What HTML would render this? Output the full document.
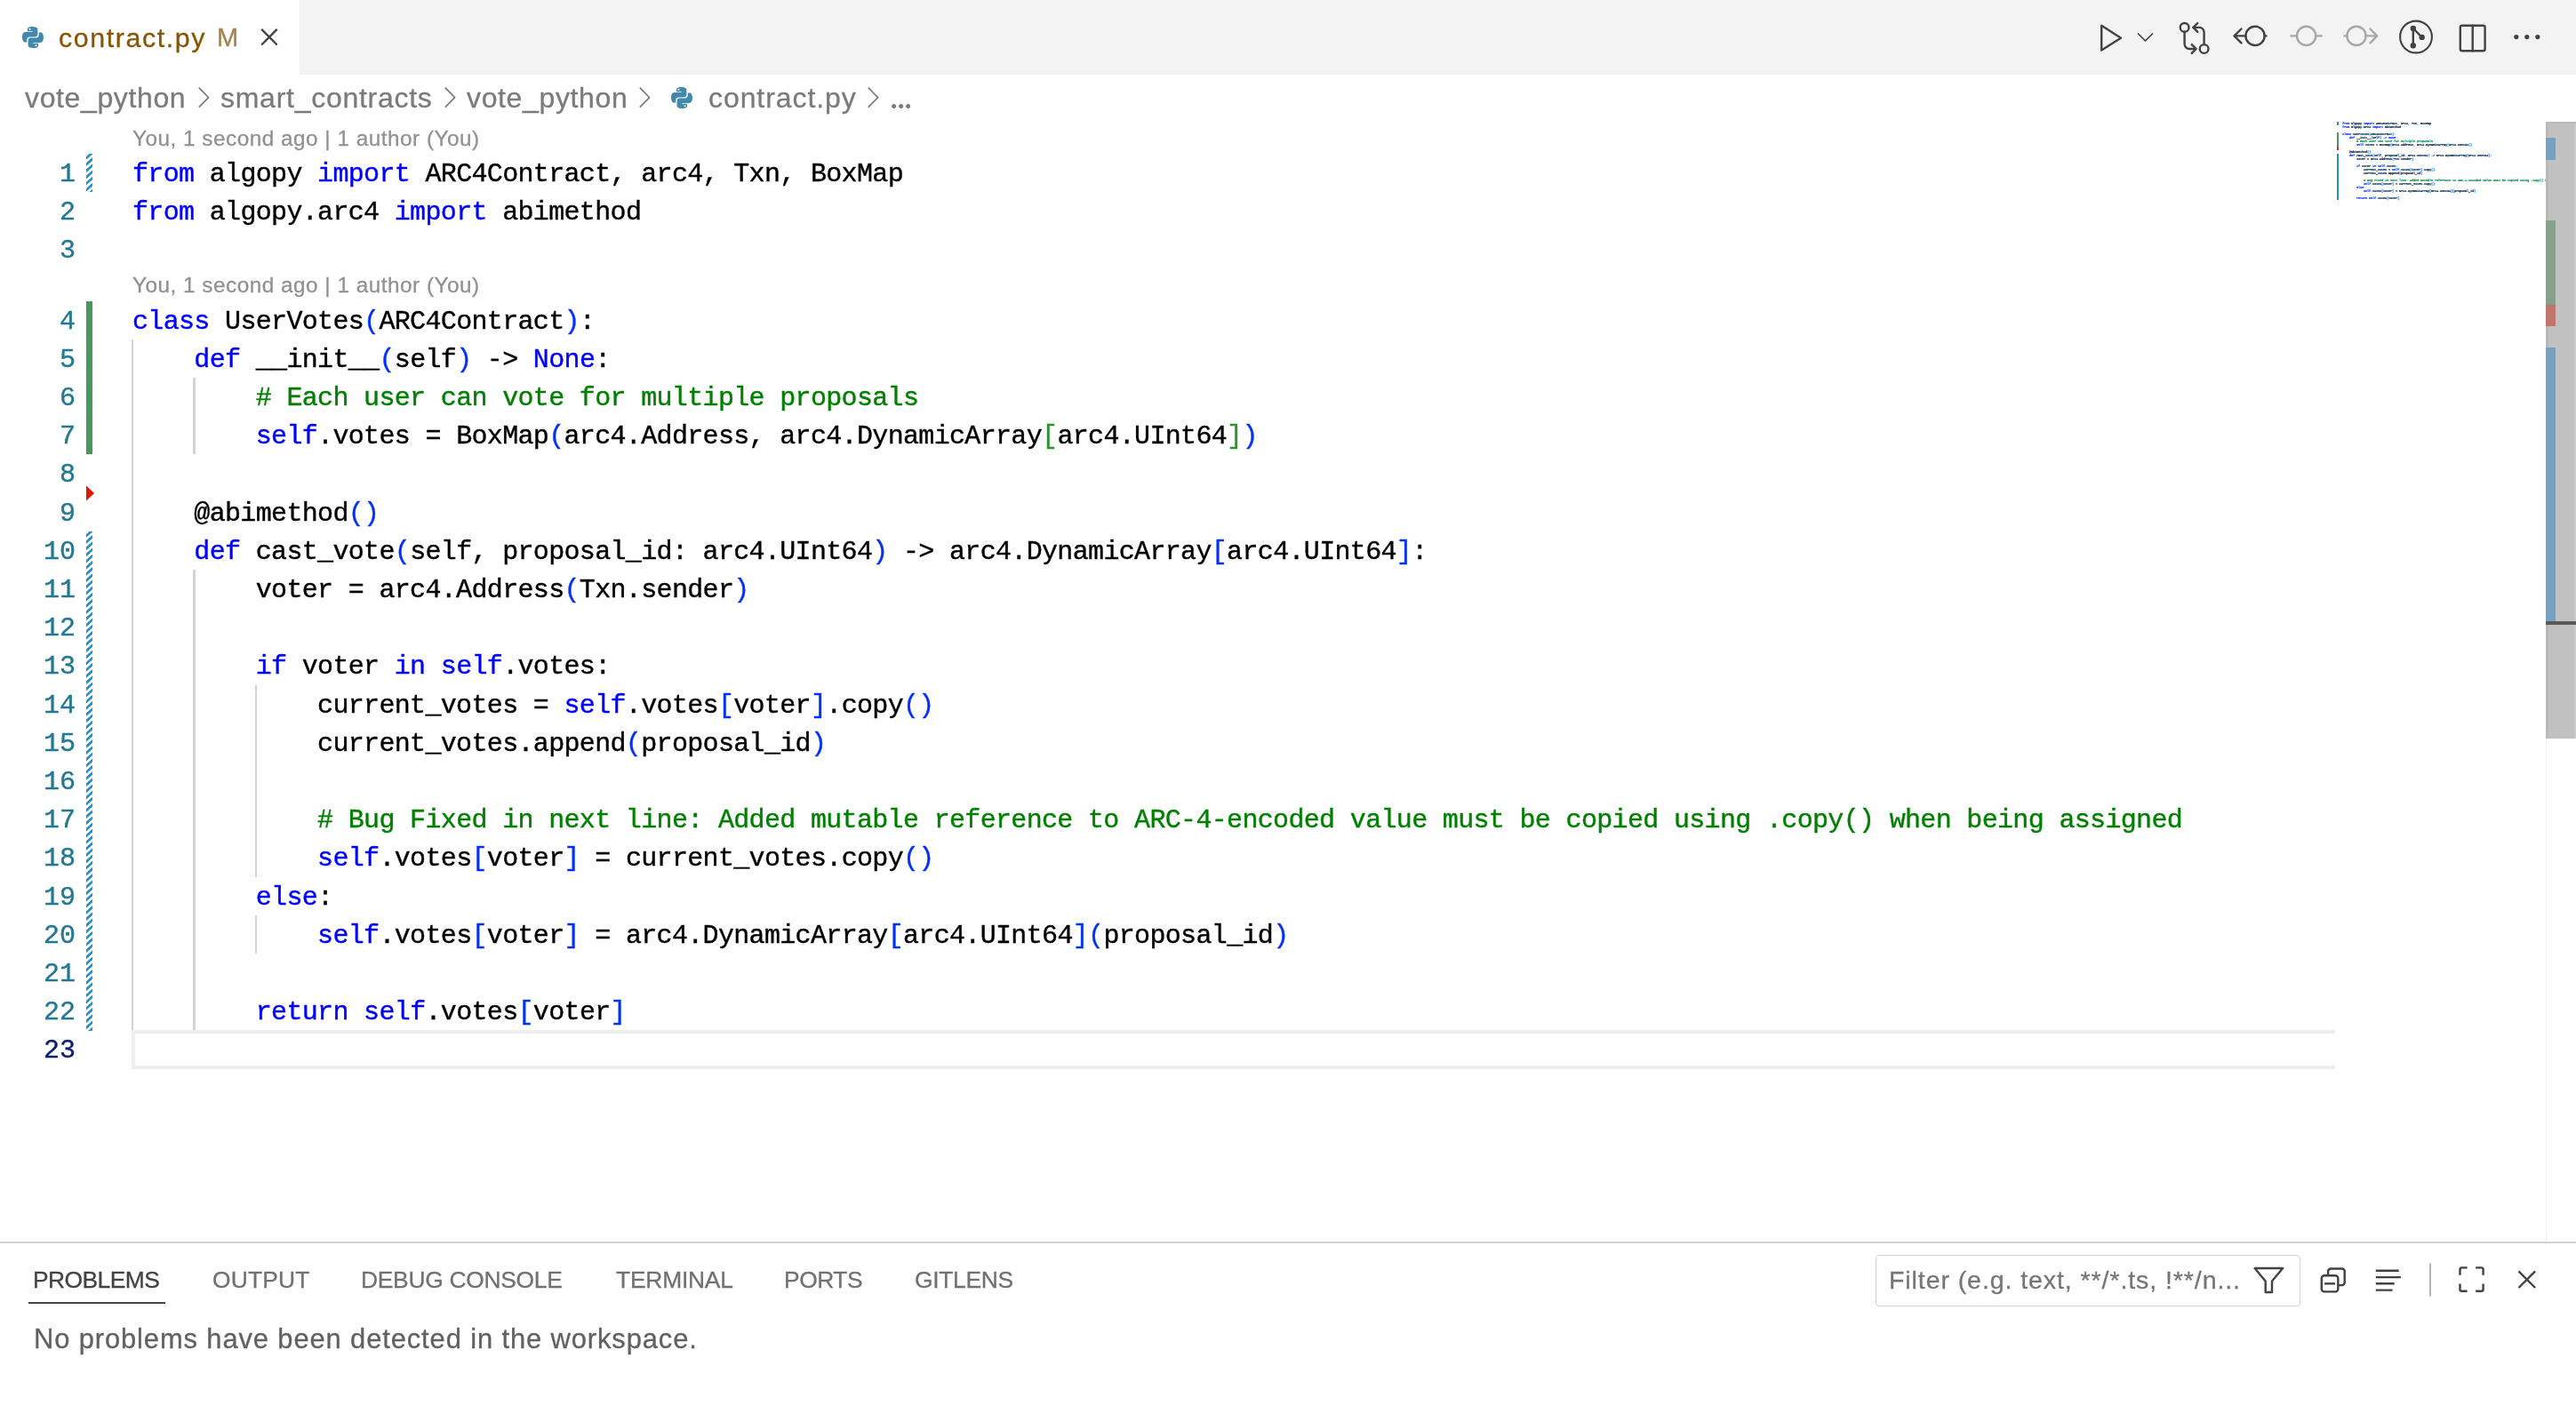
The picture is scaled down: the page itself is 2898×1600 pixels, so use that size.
<!DOCTYPE html>
<html><head><meta charset="utf-8">
<style>
*{margin:0;padding:0;box-sizing:border-box}
html,body{width:2898px;height:1600px;overflow:hidden;background:#fff}
body{position:relative;font-family:"Liberation Sans",sans-serif}
.abs{position:absolute}
#tabbar{position:absolute;left:0;top:0;width:2898px;height:84px;background:#f3f3f3}
#tab{position:absolute;left:0;top:0;width:337px;height:84px;background:#fff}
.tabtxt{position:absolute;left:65.8px;top:22.2px;font-size:30.4px;letter-spacing:1.48px;color:#875b13;white-space:nowrap;line-height:40px}
.tabm{position:absolute;left:243.7px;top:23px;font-size:27px;font-weight:bold;color:#a4834f;line-height:40px}
.bc{position:absolute;top:89.6px;font-size:32px;letter-spacing:0.46px;color:#7b7b7b;white-space:nowrap;line-height:40px}
.ln{position:absolute;left:0;width:85px;text-align:right;font-family:"Liberation Mono",monospace;font-size:30.0px;padding-top:2px;line-height:43.2px;height:43.2px;color:#237893}
.ln.act{color:#0b216f}
.cl{position:absolute;left:148.5px;font-family:"Liberation Mono",monospace;font-size:30.0px;letter-spacing:-0.6639px;padding-top:2px;line-height:43.2px;height:43.2px;color:#000;white-space:pre}
.cl,.ln{-webkit-text-stroke:0.4px currentColor;will-change:transform}
.k{color:#0000ff}
.c{color:#008000}
.b1{color:#0431fa}
.b2{color:#319331}
.ig{position:absolute;width:2.4px;background:#d3d3d3}
.lens{position:absolute;left:149.5px;font-size:24.3px;letter-spacing:0.45px;color:#919191;white-space:nowrap;line-height:30px}
.ptab{position:absolute;top:1426.7px;font-size:26.4px;letter-spacing:-0.9px;color:#717171;white-space:nowrap;line-height:26px}

.bcchev{position:absolute;top:98px}
.gbar{position:absolute;left:97px;width:7px}
.mod{background-image:linear-gradient(-45deg,#2090d3 25%,transparent 25%,transparent 50%,#2090d3 50%,#2090d3 75%,transparent 75%,transparent);background-size:7.2px 7.2px}
.add{background:#48985d}
</style></head><body>
<div id="tabbar">
  <div id="tab">
    <svg class="abs" style="left:24px;top:29px" width="26" height="26" viewBox="0 0 26 26">
      <path fill="#4289ad" d="M12.6 1c-6 0-5.6 2.6-5.6 2.6v2.7h5.7v.8H4.8S1 6.7 1 12.7s3.3 5.8 3.3 5.8h2v-2.8s-.1-3.3 3.3-3.3h5.6s3.2.1 3.2-3.1V4.2S18.9 1 12.6 1zm-3.1 1.8a1 1 0 110 2 1 1 0 010-2z"/>
      <path fill="#4289ad" d="M13.4 25c6 0 5.6-2.6 5.6-2.6v-2.7h-5.7v-.8h7.9s3.8.4 3.8-5.6-3.3-5.8-3.3-5.8h-2v2.8s.1 3.3-3.3 3.3h-5.6s-3.2-.1-3.2 3.1v5.1S7.1 25 13.4 25zm3.1-1.8a1 1 0 110-2 1 1 0 010 2z"/>
    </svg>
<div id="t_tab" class="abs" style="left:66.10px;top:22.21px;font-size:30.4px;letter-spacing:1.580px;color:#895503;font-weight:normal;white-space:nowrap;-webkit-text-stroke:0.3px #895503;will-change:transform;line-height:40px">contract.py</div>
<div id="t_tabm" class="abs" style="left:244.10px;top:21.85px;font-size:29px;letter-spacing:0.000px;color:#a4834f;font-weight:normal;white-space:nowrap;-webkit-text-stroke:0.3px #a4834f;will-change:transform;line-height:40px">M</div>
    <svg class="abs" style="left:292px;top:31px" width="22" height="22" viewBox="0 0 22 22"><path d="M2.2 1.9L19.7 19.5M19.7 1.9L2.2 19.5" stroke="#424242" stroke-width="2.4" fill="none"/></svg>
  </div>
</div>

<svg class="abs" style="left:2340px;top:0" width="558" height="84" viewBox="2340 0 558 84" fill="none" stroke="#424242" stroke-width="2.4" stroke-linecap="round" stroke-linejoin="round">
  <path d="M2364.2 28.8L2386 42.7L2364.2 56.6Z"/>
  <path d="M2405.5 38L2413.5 46L2421.5 38" stroke-width="1.7"/>
  <circle cx="2457.6" cy="30.9" r="4.9"/>
  <circle cx="2479.6" cy="55" r="4.9"/>
  <path d="M2457.6 36v13.5a5.5 5.5 0 0 0 5.5 5.5h7"/>
  <path d="M2465.7 50.1l4.9 4.9-4.9 4.9"/>
  <path d="M2479.6 50V36.4a5.5 5.5 0 0 0-5.5-5.5h-6.5"/>
  <path d="M2472.3 26l-4.9 4.9 4.9 4.9"/>
  <circle cx="2537" cy="40.4" r="10.6"/>
  <path d="M2526.4 40.4H2513.5M2521.5 32.5L2513.5 40.4L2521.5 48.3M2547.6 40.4H2549.5"/>
  <g stroke="#a8a8a8">
  <circle cx="2594.6" cy="40.4" r="10.6"/>
  <path d="M2577.5 40.4H2584M2605.2 40.4H2611.7"/>
  <circle cx="2651" cy="40.4" r="10.6"/>
  <path d="M2637.5 40.4H2640.4M2661.6 40.4H2673.5M2666.5 32.5L2674.2 40.4L2666.5 48.3"/>
  </g>
  <circle cx="2718" cy="41.5" r="17.9" stroke-width="2.1"/>
  <path d="M2714.8 32V51.2M2714.8 32L2724.7 41.9"/>
  <circle cx="2767" cy="27" r="0" />
  <rect x="2767.8" y="28.8" width="27.8" height="28.4" rx="2"/>
  <path d="M2781.7 28.8V57.2"/>
</svg>
<svg class="abs" style="left:2700px;top:20px" width="40" height="40" viewBox="2700 20 40 40" fill="#424242">
  <circle cx="2714.8" cy="32" r="3.2"/><circle cx="2714.8" cy="51.2" r="3.2"/><circle cx="2724.7" cy="41.9" r="3.2"/>
</svg>
<svg class="abs" style="left:2820px;top:30px" width="50" height="24" viewBox="2820 30 50 24" fill="#424242">
  <circle cx="2830.8" cy="41.6" r="2.6"/><circle cx="2842.8" cy="41.6" r="2.6"/><circle cx="2854.8" cy="41.6" r="2.6"/>
</svg>
<!-- breadcrumbs -->
<div id="t_bc1" class="abs" style="left:28.05px;top:89.61px;font-size:32px;letter-spacing:0.630px;color:#7b7b7b;font-weight:normal;white-space:nowrap;-webkit-text-stroke:0.3px #7b7b7b;will-change:transform;line-height:40px">vote_python</div>
<div id="t_bc2" class="abs" style="left:248.00px;top:89.61px;font-size:32px;letter-spacing:0.731px;color:#7b7b7b;font-weight:normal;white-space:nowrap;-webkit-text-stroke:0.3px #7b7b7b;will-change:transform;line-height:40px">smart_contracts</div>
<div id="t_bc3" class="abs" style="left:525.00px;top:89.61px;font-size:32px;letter-spacing:0.640px;color:#7b7b7b;font-weight:normal;white-space:nowrap;-webkit-text-stroke:0.3px #7b7b7b;will-change:transform;line-height:40px">vote_python</div>
<div id="t_bc4" class="abs" style="left:796.90px;top:89.61px;font-size:32px;letter-spacing:0.920px;color:#7b7b7b;font-weight:normal;white-space:nowrap;-webkit-text-stroke:0.3px #7b7b7b;will-change:transform;line-height:40px">contract.py</div>
<svg class="abs" style="left:1000px;top:112px" width="30" height="14" viewBox="1000 112 30 14" fill="#7b7b7b"><circle cx="1005.6" cy="119.4" r="2.5"/><circle cx="1013.6" cy="119.4" r="2.5"/><circle cx="1021.6" cy="119.4" r="2.5"/></svg>
<svg class="bcchev" style="left:222px" width="14" height="24" viewBox="0 0 14 24"><path d="M1.8 0.7L12.6 11.7L1.8 22.6" stroke="#7b7b7b" stroke-width="1.7" fill="none"/></svg>
<svg class="bcchev" style="left:499px" width="14" height="24" viewBox="0 0 14 24"><path d="M1.8 0.7L12.6 11.7L1.8 22.6" stroke="#7b7b7b" stroke-width="1.7" fill="none"/></svg>
<svg class="bcchev" style="left:718px" width="14" height="24" viewBox="0 0 14 24"><path d="M1.8 0.7L12.6 11.7L1.8 22.6" stroke="#7b7b7b" stroke-width="1.7" fill="none"/></svg>
<svg class="bcchev" style="left:975px" width="14" height="24" viewBox="0 0 14 24"><path d="M1.8 0.7L12.6 11.7L1.8 22.6" stroke="#7b7b7b" stroke-width="1.7" fill="none"/></svg>
<svg class="abs" style="left:754px;top:97px" width="26" height="26" viewBox="0 0 26 26">
  <path fill="#4289ad" d="M12.6 1c-6 0-5.6 2.6-5.6 2.6v2.7h5.7v.8H4.8S1 6.7 1 12.7s3.3 5.8 3.3 5.8h2v-2.8s-.1-3.3 3.3-3.3h5.6s3.2.1 3.2-3.1V4.2S18.9 1 12.6 1zm-3.1 1.8a1 1 0 110 2 1 1 0 010-2z"/>
  <path fill="#4289ad" d="M13.4 25c6 0 5.6-2.6 5.6-2.6v-2.7h-5.7v-.8h7.9s3.8.4 3.8-5.6-3.3-5.8-3.3-5.8h-2v2.8s.1 3.3-3.3 3.3h-5.6s-3.2-.1-3.2 3.1v5.1S7.1 25 13.4 25zm3.1-1.8a1 1 0 110-2 1 1 0 010 2z"/>
</svg>



<div class="gbar mod" style="top:173px;height:43.2px"></div>
<div class="gbar add" style="top:338.6px;height:172.8px"></div>
<svg class="abs" style="left:96px;top:545px" width="12" height="20" viewBox="0 0 12 20"><path d="M1 1.5L10 10L1 18.5Z" fill="#e51400"/></svg>
<div class="gbar mod" style="top:598.2px;height:561.6px"></div>
<div class="abs" style="left:148px;top:1159px;width:2479px;height:44px;border:4px solid #eeeeee;border-right:none"></div>
<div class="ig" style="left:148.10px;top:381.80px;height:777.60px"></div>
<div class="ig" style="left:217.46px;top:425.00px;height:86.40px"></div>
<div class="ig" style="left:217.46px;top:641.00px;height:518.40px"></div>
<div class="ig" style="left:286.81px;top:770.60px;height:216.00px"></div>
<div class="ig" style="left:286.81px;top:1029.80px;height:43.20px"></div>
<div class="ln" style="top:173.00px">1</div>
<div class="cl" style="top:173.00px"><span class="k">from</span> algopy <span class="k">import</span> ARC4Contract, arc4, Txn, BoxMap</div>
<div class="ln" style="top:216.20px">2</div>
<div class="cl" style="top:216.20px"><span class="k">from</span> algopy.arc4 <span class="k">import</span> abimethod</div>
<div class="ln" style="top:259.40px">3</div>
<div class="ln" style="top:338.60px">4</div>
<div class="cl" style="top:338.60px"><span class="k">class</span> UserVotes<span class="b1">(</span>ARC4Contract<span class="b1">)</span>:</div>
<div class="ln" style="top:381.80px">5</div>
<div class="cl" style="top:381.80px">    <span class="k">def</span> __init__<span class="b1">(</span>self<span class="b1">)</span> -&gt; <span class="k">None</span>:</div>
<div class="ln" style="top:425.00px">6</div>
<div class="cl" style="top:425.00px">        <span class="c"># Each user can vote for multiple proposals</span></div>
<div class="ln" style="top:468.20px">7</div>
<div class="cl" style="top:468.20px">        <span class="k">self</span>.votes = BoxMap<span class="b1">(</span>arc4.Address, arc4.DynamicArray<span class="b2">[</span>arc4.UInt64<span class="b2">]</span><span class="b1">)</span></div>
<div class="ln" style="top:511.40px">8</div>
<div class="ln" style="top:554.60px">9</div>
<div class="cl" style="top:554.60px">    @abimethod<span class="b1">()</span></div>
<div class="ln" style="top:597.80px">10</div>
<div class="cl" style="top:597.80px">    <span class="k">def</span> cast_vote<span class="b1">(</span>self, proposal_id: arc4.UInt64<span class="b1">)</span> -&gt; arc4.DynamicArray<span class="b1">[</span>arc4.UInt64<span class="b1">]</span>:</div>
<div class="ln" style="top:641.00px">11</div>
<div class="cl" style="top:641.00px">        voter = arc4.Address<span class="b1">(</span>Txn.sender<span class="b1">)</span></div>
<div class="ln" style="top:684.20px">12</div>
<div class="ln" style="top:727.40px">13</div>
<div class="cl" style="top:727.40px">        <span class="k">if</span> voter <span class="k">in</span> <span class="k">self</span>.votes:</div>
<div class="ln" style="top:770.60px">14</div>
<div class="cl" style="top:770.60px">            current_votes = <span class="k">self</span>.votes<span class="b1">[</span>voter<span class="b1">]</span>.copy<span class="b1">()</span></div>
<div class="ln" style="top:813.80px">15</div>
<div class="cl" style="top:813.80px">            current_votes.append<span class="b1">(</span>proposal_id<span class="b1">)</span></div>
<div class="ln" style="top:857.00px">16</div>
<div class="ln" style="top:900.20px">17</div>
<div class="cl" style="top:900.20px">            <span class="c"># Bug Fixed in next line: Added mutable reference to ARC-4-encoded value must be copied using .copy() when being assigned</span></div>
<div class="ln" style="top:943.40px">18</div>
<div class="cl" style="top:943.40px">            <span class="k">self</span>.votes<span class="b1">[</span>voter<span class="b1">]</span> = current_votes.copy<span class="b1">()</span></div>
<div class="ln" style="top:986.60px">19</div>
<div class="cl" style="top:986.60px">        <span class="k">else</span>:</div>
<div class="ln" style="top:1029.80px">20</div>
<div class="cl" style="top:1029.80px">            <span class="k">self</span>.votes<span class="b1">[</span>voter<span class="b1">]</span> = arc4.DynamicArray<span class="b1">[</span>arc4.UInt64<span class="b1">]</span><span class="b1">(</span>proposal_id<span class="b1">)</span></div>
<div class="ln" style="top:1073.00px">21</div>
<div class="ln" style="top:1116.20px">22</div>
<div class="cl" style="top:1116.20px">        <span class="k">return</span> <span class="k">self</span>.votes<span class="b1">[</span>voter<span class="b1">]</span></div>
<div class="ln act" style="top:1159.40px">23</div>

<div id="t_lens1" class="abs" style="left:148.60px;top:140.58px;font-size:24.3px;letter-spacing:0.511px;color:#919191;font-weight:normal;white-space:nowrap;-webkit-text-stroke:0.3px #919191;will-change:transform;line-height:30px">You, 1 second ago | 1 author (You)</div>
<div id="t_lens2" class="abs" style="left:148.60px;top:306.18px;font-size:24.3px;letter-spacing:0.511px;color:#919191;font-weight:normal;white-space:nowrap;-webkit-text-stroke:0.3px #919191;will-change:transform;line-height:30px">You, 1 second ago | 1 author (You)</div>


<!-- scrollbar -->
<div class="abs" style="left:2864px;top:137px;width:34px;height:693.7px;background:#c1c1c1"></div>
<div class="abs" style="left:2864px;top:137px;width:2.8px;height:693.7px;background:#b9b9b9"></div>
<div class="abs" style="left:2864px;top:137px;width:34px;height:2.2px;background:#b9b9b9"></div>
<div class="abs" style="left:2895.8px;top:139px;width:2.2px;height:691.7px;background:#cbcbcb"></div>
<div class="abs" style="left:2864px;top:830.7px;width:1px;height:566px;background:#efefef"></div>
<div class="abs" style="left:2864px;top:155.4px;width:11.4px;height:24.5px;background:#7ba0be"></div>
<div class="abs" style="left:2864px;top:247.5px;width:11.4px;height:95.2px;background:#86a08c"></div>
<div class="abs" style="left:2864px;top:342.7px;width:11.4px;height:24.3px;background:#c0756b"></div>
<div class="abs" style="left:2864px;top:390.6px;width:11.4px;height:308.2px;background:#7ba0be"></div>
<div class="abs" style="left:2864px;top:699px;width:34px;height:3.7px;background:#5a5a5a"></div>
<!-- minimap deco -->
<div class="abs" style="left:2628.8px;top:136.8px;width:2.4px;height:4px;background:#2090d3"></div>
<div class="abs" style="left:2628.8px;top:149px;width:2.4px;height:16px;background:#48985d"></div>
<div class="abs" style="left:2628.8px;top:165px;width:2.4px;height:4px;background:#c9322a"></div>
<div class="abs" style="left:2628.8px;top:173px;width:2.4px;height:52px;background:#2090d3"></div>
<div class="abs" style="left:2634.8px;top:137px;width:229.2px;height:100px;overflow:hidden"><div style="width:2292px;transform:scale(0.1);transform-origin:0 0;font-family:'Liberation Mono',monospace;font-size:33.33px;line-height:40px;font-weight:bold;color:#000;-webkit-text-stroke:1px currentColor"><div style="height:40px;white-space:pre"><span class="k">from</span> algopy <span class="k">import</span> ARC4Contract, arc4, Txn, BoxMap</div><div style="height:40px;white-space:pre"><span class="k">from</span> algopy.arc4 <span class="k">import</span> abimethod</div><div style="height:40px;white-space:pre"></div><div style="height:40px;white-space:pre"><span class="k">class</span> UserVotes<span class="b1">(</span>ARC4Contract<span class="b1">)</span>:</div><div style="height:40px;white-space:pre">    <span class="k">def</span> __init__<span class="b1">(</span>self<span class="b1">)</span> -&gt; <span class="k">None</span>:</div><div style="height:40px;white-space:pre">        <span class="c"># Each user can vote for multiple proposals</span></div><div style="height:40px;white-space:pre">        <span class="k">self</span>.votes = BoxMap<span class="b1">(</span>arc4.Address, arc4.DynamicArray<span class="b2">[</span>arc4.UInt64<span class="b2">]</span><span class="b1">)</span></div><div style="height:40px;white-space:pre"></div><div style="height:40px;white-space:pre">    @abimethod<span class="b1">()</span></div><div style="height:40px;white-space:pre">    <span class="k">def</span> cast_vote<span class="b1">(</span>self, proposal_id: arc4.UInt64<span class="b1">)</span> -&gt; arc4.DynamicArray<span class="b1">[</span>arc4.UInt64<span class="b1">]</span>:</div><div style="height:40px;white-space:pre">        voter = arc4.Address<span class="b1">(</span>Txn.sender<span class="b1">)</span></div><div style="height:40px;white-space:pre"></div><div style="height:40px;white-space:pre">        <span class="k">if</span> voter <span class="k">in</span> <span class="k">self</span>.votes:</div><div style="height:40px;white-space:pre">            current_votes = <span class="k">self</span>.votes<span class="b1">[</span>voter<span class="b1">]</span>.copy<span class="b1">()</span></div><div style="height:40px;white-space:pre">            current_votes.append<span class="b1">(</span>proposal_id<span class="b1">)</span></div><div style="height:40px;white-space:pre"></div><div style="height:40px;white-space:pre">            <span class="c"># Bug Fixed in next line: Added mutable reference to ARC-4-encoded value must be copied using .copy() when being assigned</span></div><div style="height:40px;white-space:pre">            <span class="k">self</span>.votes<span class="b1">[</span>voter<span class="b1">]</span> = current_votes.copy<span class="b1">()</span></div><div style="height:40px;white-space:pre">        <span class="k">else</span>:</div><div style="height:40px;white-space:pre">            <span class="k">self</span>.votes<span class="b1">[</span>voter<span class="b1">]</span> = arc4.DynamicArray<span class="b1">[</span>arc4.UInt64<span class="b1">]</span><span class="b1">(</span>proposal_id<span class="b1">)</span></div><div style="height:40px;white-space:pre"></div><div style="height:40px;white-space:pre">        <span class="k">return</span> <span class="k">self</span>.votes<span class="b1">[</span>voter<span class="b1">]</span></div></div></div>
<!-- panel -->
<div class="abs" style="left:0;top:1397px;width:2898px;height:2px;background:#d4d4d4"></div>
<div id="t_p1" class="abs" style="left:36.70px;top:1426.75px;font-size:26.4px;letter-spacing:-0.557px;color:#424242;font-weight:normal;white-space:nowrap;-webkit-text-stroke:0.3px #424242;will-change:transform;line-height:26px">PROBLEMS</div>
<div class="abs" style="left:32px;top:1465px;width:154px;height:2.2px;background:#424242"></div>
<div id="t_p2" class="abs" style="left:238.60px;top:1426.75px;font-size:26.4px;letter-spacing:0.180px;color:#717171;font-weight:normal;white-space:nowrap;-webkit-text-stroke:0.3px #717171;will-change:transform;line-height:26px">OUTPUT</div>
<div id="t_p3" class="abs" style="left:406.00px;top:1426.75px;font-size:26.4px;letter-spacing:-0.283px;color:#717171;font-weight:normal;white-space:nowrap;-webkit-text-stroke:0.3px #717171;will-change:transform;line-height:26px">DEBUG CONSOLE</div>
<div id="t_p4" class="abs" style="left:692.60px;top:1426.75px;font-size:26.4px;letter-spacing:-0.214px;color:#717171;font-weight:normal;white-space:nowrap;-webkit-text-stroke:0.3px #717171;will-change:transform;line-height:26px">TERMINAL</div>
<div id="t_p5" class="abs" style="left:882.10px;top:1426.75px;font-size:26.4px;letter-spacing:-0.450px;color:#717171;font-weight:normal;white-space:nowrap;-webkit-text-stroke:0.3px #717171;will-change:transform;line-height:26px">PORTS</div>
<div id="t_p6" class="abs" style="left:1029.10px;top:1426.75px;font-size:26.4px;letter-spacing:-0.300px;color:#717171;font-weight:normal;white-space:nowrap;-webkit-text-stroke:0.3px #717171;will-change:transform;line-height:26px">GITLENS</div>
<div id="t_nop" class="abs" style="left:38.30px;top:1489.29px;font-size:30.9px;letter-spacing:0.888px;color:#616161;font-weight:normal;white-space:nowrap;-webkit-text-stroke:0.3px #616161;will-change:transform;line-height:36px">No problems have been detected in the workspace.</div>

<div class="abs" style="left:2109.5px;top:1411.6px;width:478.5px;height:58px;border:1.8px solid #d2d2d2;border-radius:4px"></div>
<div id="t_filter" class="abs" style="left:2124.70px;top:1423.92px;font-size:28.5px;letter-spacing:0.923px;color:#767676;font-weight:normal;white-space:nowrap;-webkit-text-stroke:0.3px #767676;will-change:transform;line-height:32px">Filter (e.g. text, **/*.ts, !**/n...</div>
<svg class="abs" style="left:2520px;top:1400px" width="378" height="80" viewBox="2520 1400 378 80" fill="none" stroke="#424242" stroke-width="2.4" stroke-linejoin="round">
  <path d="M2536.6 1427H2568.1L2556 1441.5V1454H2548.7V1441.5Z"/>
  <rect x="2611.8" y="1435.2" width="18.5" height="18.2" rx="3"/>
  <path d="M2619.1 1435.2V1430.5A3 3 0 0 1 2622.1 1427.5H2634.7A3 3 0 0 1 2637.7 1430.5V1443.1A3 3 0 0 1 2634.7 1446.1H2630.3"/>
  <path d="M2615.1 1444.3H2627"/>
  <path d="M2672.8 1429.8H2698.6M2672.8 1437.1H2700.9M2672.8 1444.3H2693.7M2672.8 1451.6H2691.6"/>
  <path d="M2734 1421.2V1458.8" stroke="#b4b4b4" stroke-width="2"/>
  <path d="M2767.5 1434.8V1428.4a2 2 0 0 1 2-2H2775.6M2785.2 1426.4H2791.6a2 2 0 0 1 2 2V1434.8M2793.6 1444.5V1450.7a2 2 0 0 1-2 2H2785.2M2775.6 1452.7H2769.5a2 2 0 0 1-2-2V1444.5"/>
  <path d="M2833.5 1430.4L2852.1 1449M2852.1 1430.4L2833.5 1449"/>
</svg>
</body></html>
